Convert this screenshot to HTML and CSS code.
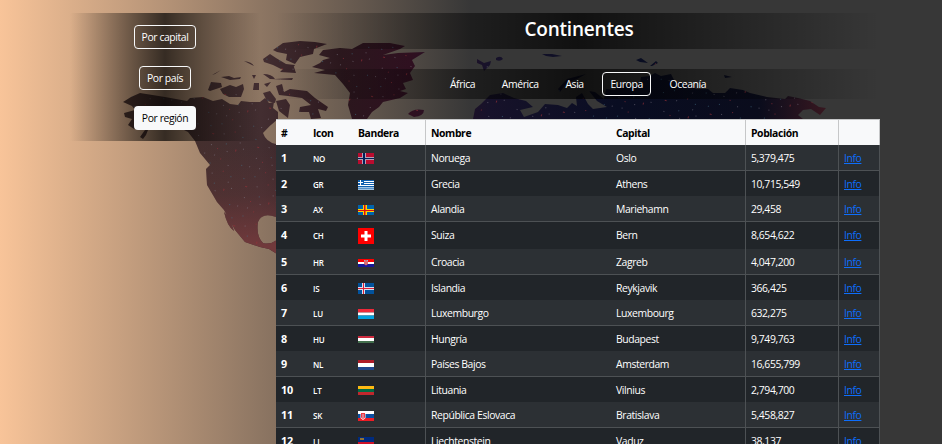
FILE: index.html
```
<!DOCTYPE html>
<html lang="es">
<head>
<meta charset="utf-8">
<title>Continentes</title>
<link rel="stylesheet" href="styles.css">
</head>
<body>
<svg class="world" viewBox="0 0 942 444" aria-hidden="true">
  <defs>
    <linearGradient id="space" gradientUnits="userSpaceOnUse" x1="120" y1="0" x2="830" y2="0">
      <stop offset="0" stop-color="#46302a"/><stop offset=".2" stop-color="#432e31"/><stop offset=".31" stop-color="#2b171d"/><stop offset=".41" stop-color="#2f1020"/><stop offset=".52" stop-color="#17122a"/><stop offset=".7" stop-color="#090d22"/><stop offset=".9" stop-color="#0a0c1c"/><stop offset="1" stop-color="#3a1820"/>
    </linearGradient>
    <linearGradient id="glow" x1="0" y1="0" x2="0" y2="1"><stop offset="0" stop-color="#70393b" stop-opacity="0"/><stop offset=".5" stop-color="#70393b" stop-opacity=".25"/><stop offset="1" stop-color="#70393b"/></linearGradient>
    <pattern id="stars" width="47" height="41" patternUnits="userSpaceOnUse" patternTransform="rotate(17)">
      <g fill="#8a8491" fill-opacity=".5"><path d="M5 4h1v1h-1zM31 9h1v1h-1zM18 21h1v1h-1zM41 30h1v1h-1zM9 35h1v1h-1zM26 37h1v1h-1zM15 3h1v1h-1zM36 25h1v1h-1z"/></g>
      <g fill="#427087" fill-opacity=".6"><path d="M13 12h1v1h-1zM37 19h1v1h-1zM23 30h1v1h-1zM44 5h1v1h-1zM3 17h1v1h-1z"/></g>
      <g fill="#983038" fill-opacity=".65"><path d="M22 5h1v1h-1zM7 24h2v1h-2zM34 33h1v2h-1zM28 16h1v1h-1zM16 37h1v1h-1z"/></g>
    </pattern>
    <path id="land" d="M123 102L131 97 140 93 165 97 187 101 190 98 203 97 213 101 222 99 230 104 238 105 241 101 250 102 260 102 265 98 269 103 274 102 273 108 278 112 278 119Q269 126 263 133Q266 142 276 144V217Q262 212 258 222Q256 236 263 243Q270 245 277 240V254L269 249 260 247 245 242 235 230 224 210 217 202 207 185 206 169 210 165 200 153 195 141 188 132 180 128 160 123 150 125 146 135 143 139 140 137 145 130 134 129 128 125 132 119 125 117 124 113 135 110 132 106ZM224 212Q230 217 234 231Q227 226 224 212ZM312 67L320 63 323 60 330 58 319 55 323 50 340 48 352 49 363 43 390 43 405 46 400 49 383 55 398 53 425 52 412 60 415 66 410 73 413 80 403 83 406 89 400 91 408 93 400 98 383 102 379 107 372 112 367 119H352L348 105 350 93 343 84 335 75 314 73 325 70ZM273 50L283 43 300 41 315 42 327 44 314 49 313 54 300 57 295 64 286 60 287 54 277 52ZM263 59L270 54 276 58 286 64 295 65 291 71 281 69 273 65 264 62ZM283 69L294 67 296 73 280 72ZM263 74Q272 74 275 79L293 78 292 80 270 79ZM244 61Q252 62 254 66ZM212 75L221 70 215 74ZM221 77L229 76 234 78 241 77 240 79 230 80ZM208 90L211 82 221 83 222 87 210 91ZM220 89L230 85 236 87 243 84 244 89 241 97 229 97 223 94ZM252 75L256 75 254 79ZM254 83L259 83 259 90 253 90ZM264 84L271 82 267 87ZM263 93L270 91 276 99 275 103 267 101ZM276 86L282 84 284 92 290 89 307 91 315 98 328 107 326 111 318 109 321 118 311 119 309 112 299 112 300 107 311 105 302 98 288 96 279 95ZM276 101L286 99 290 105 288 118 279 111ZM408 114Q413 108 424 110Q424 116 414 117ZM473 119L475 109 481 104 490 95 503 93 514 98 526 101 533 107 520 110 524 117 538 112 545 104 558 105 567 108 572 103 577 106 576 97 582 93 588 104 593 109 607 107 597 101 589 91 595 92 604 99 606 89 615 90 620 84 635 86 640 83 641 77 650 76 655 73 661 76 671 74 675 82 692 85 696 89 708 89 713 93 725 93 730 88 743 90 750 93 767 97 785 99 788 96 798 98 810 101 819 107 826 108 820 115 811 109 803 110 798 115 803 119ZM477 59L484 63 491 61 490 65 484 71 482 65 477 63ZM496 58Q501 55 503 59Q500 62 496 60ZM542 54L552 54 562 56 553 57 546 56ZM636 60L641 58 648 63 640 62ZM650 66L656 61 658 63 652 66ZM558 89L567 79 586 74 577 79 567 83 560 92ZM724 75L732 77 725 78Z"/>
    <clipPath id="clip"><use href="#land"/></clipPath>
  </defs>
  <use href="#land" fill="url(#space)"/>
  <g clip-path="url(#clip)"><rect x="195" y="145" width="90" height="100" fill="url(#glow)"/><rect x="195" y="245" width="90" height="20" fill="#70393b"/><rect width="942" height="270" fill="url(#stars)"/></g>
</svg>
<div class="layout">
  <aside class="sidebar">
    <a class="btn outline">Por capital</a>
    <a class="btn outline">Por país</a>
    <a class="btn solid">Por región</a>
  </aside>
  <main class="content">
    <h1 class="title">Continentes</h1>
    <nav class="regions">
      <a class="btn">África</a><a class="btn">América</a><a class="btn">Asia</a><a class="btn outline">Europa</a><a class="btn">Oceanía</a>
    </nav>
    <table class="countries">
      <colgroup><col class="c1"><col class="c2"><col class="c3"><col class="c4"><col class="c5"><col class="c6"><col class="c7"></colgroup>
      <thead><tr><th>#</th><th>Icon</th><th>Bandera</th><th>Nombre</th><th>Capital</th><th>Población</th><th></th></tr></thead>
      <tbody>
        <tr><th>1</th><td class="code">NO</td><td><svg class="flag" width="16" height="11"><path fill="#ba0c2f" d="M0 0h16v11H0z"/><path fill="#b3a0b4" d="M4 0h4v11H4zM0 4h16v3H0z"/><path fill="#00205b" d="M5 0h2v11H5zM0 5h16v1H0z"/></svg></td><td>Noruega</td><td>Oslo</td><td>5,379,475</td><td><a href="#">Info</a></td></tr>
        <tr class="even"><th>2</th><td class="code">GR</td><td><svg class="flag" width="16" height="10"><path fill="#0d5eaf" d="M0 0h16v10H0z"/><path fill="#fff" d="M6 1h10v1H6zM6 3h10v1H6zM0 5h16v1H0z"/><path fill="#9fc2e1" d="M0 7h16v1H0zM0 8.500h16V10H0z"/><path fill="#fff" d="M2 0h1v5H2zM0 2h5v1H0z"/></svg></td><td>Grecia</td><td>Athens</td><td>10,715,549</td><td><a href="#">Info</a></td></tr>
        <tr><th>3</th><td class="code">AX</td><td><svg class="flag" width="16" height="10"><path fill="#0064ad" d="M0 0h16v10H0z"/><path fill="#ffd300" d="M5 0h4v10H5zM0 4h16v3H0z"/><path fill="#da0e15" d="M6 0h1.500v10H6zM0 5h16v1H0z"/></svg></td><td>Alandia</td><td>Mariehamn</td><td>29,458</td><td><a href="#">Info</a></td></tr>
        <tr class="even tall"><th>4</th><td class="code">CH</td><td><svg class="flag" width="16" height="16"><path fill="red" d="M0 0h16v16H0z"/><path fill="#fff" d="M6.500 3h3v10h-3zM3 6.500h10v3H3z"/></svg></td><td>Suiza</td><td>Bern</td><td>8,654,622</td><td><a href="#">Info</a></td></tr>
        <tr><th>5</th><td class="code">HR</td><td><svg class="flag" width="16" height="8"><path fill="red" d="M0 0h16v3H0z"/><path fill="#fff" d="M0 3h16v2H0z"/><path fill="#171796" d="M0 5h16v3H0z"/><path fill="#d96c73" d="M6 1h4v4L8 6.500 6 5z"/><path fill="#8eb0d0" d="M6 1h1v1H6zM9 1h1v1H9z"/></svg></td><td>Croacia</td><td>Zagreb</td><td>4,047,200</td><td><a href="#">Info</a></td></tr>
        <tr class="even"><th>6</th><td class="code">IS</td><td><svg class="flag" width="16" height="11"><path fill="#02529c" d="M0 0h16v11H0z"/><path fill="#d6dfed" d="M4 0h3v11H4zM0 4h16v3H0z"/><path fill="#dc1e35" d="M5 0h1v11H5zM0 5h16v1H0z"/></svg></td><td>Islandia</td><td>Reykjavik</td><td>366,425</td><td><a href="#">Info</a></td></tr>
        <tr><th>7</th><td class="code">LU</td><td><svg class="flag" width="16" height="10"><path fill="#ed2939" d="M0 0h16v3.500H0z"/><path fill="#fff" d="M0 3.500h16v3H0z"/><path fill="#00a1de" d="M0 6.500h16V10H0z"/></svg></td><td>Luxemburgo</td><td>Luxembourg</td><td>632,275</td><td><a href="#">Info</a></td></tr>
        <tr class="even"><th>8</th><td class="code">HU</td><td><svg class="flag" width="16" height="7"><path fill="#cd2a3e" d="M0 0h16v2H0z"/><path fill="#fff" d="M0 2h16v3H0z"/><path fill="#436f4d" d="M0 5h16v2H0z"/></svg></td><td>Hungría</td><td>Budapest</td><td>9,749,763</td><td><a href="#">Info</a></td></tr>
        <tr><th>9</th><td class="code">NL</td><td><svg class="flag" width="16" height="10"><path fill="#ae1c28" d="M0 0h16v3H0z"/><path fill="#fff" d="M0 3h16v4H0z"/><path fill="#21468b" d="M0 7h16v3H0z"/></svg></td><td>Países Bajos</td><td>Amsterdam</td><td>16,655,799</td><td><a href="#">Info</a></td></tr>
        <tr class="even"><th>10</th><td class="code">LT</td><td><svg class="flag" width="16" height="9"><path fill="#fdb913" d="M0 0h16v3H0z"/><path fill="#006a44" d="M0 3h16v3H0z"/><path fill="#c1272d" d="M0 6h16v3H0z"/></svg></td><td>Lituania</td><td>Vilnius</td><td>2,794,700</td><td><a href="#">Info</a></td></tr>
        <tr><th>11</th><td class="code">SK</td><td><svg class="flag" width="16" height="10"><path fill="#fff" d="M0 0h16v3H0z"/><path fill="#0b4ea2" d="M0 3h16v4H0z"/><path fill="#ee1c25" d="M0 7h16v3H0z"/><path fill="#fff" d="M2.500 2h5v5L5 9 2.500 7z"/><path fill="#ee3540" d="M3 2h4v4.500L5 8 3 6.500z"/><path fill="#c9cbe2" d="M4.500 3h1v4h-1z"/></svg></td><td>República Eslovaca</td><td>Bratislava</td><td>5,458,827</td><td><a href="#">Info</a></td></tr>
        <tr class="even"><th>12</th><td class="code">LI</td><td><svg class="flag" width="16" height="10"><path fill="#002b7f" d="M0 0h16v5H0z"/><path fill="#ce1126" d="M0 5h16v5H0z"/><path fill="#927433" d="M2 1h4v2H2z"/></svg></td><td>Liechtenstein</td><td>Vaduz</td><td>38,137</td><td><a href="#">Info</a></td></tr>
      </tbody>
    </table>
  </main>
</div>
</body>
</html>
```

FILE: styles.css
```
* { box-sizing: border-box; }
html, body { height: 100%; }
body {
  margin: 0;
  overflow: hidden;
  background: linear-gradient(to right, #f8c499, #373737 50%);
  color: #fff;
  font: 10.4px/16px "Open Sans", "Noto Sans", sans-serif;
  letter-spacing: -0.4px;
}
.world { position: absolute; left: 0; top: 0; width: 942px; height: 444px; }
.layout {
  position: relative;
  display: grid;
  grid-template-columns: 190px 604px;
  column-gap: 16px;
  width: 810px;
  margin-left: 70px;
  padding-top: 13px;
  align-items: start;
}
.sidebar, .title, .regions {
  background: linear-gradient(to right, transparent, rgba(0, 0, 0, .7), transparent);
}
.sidebar {
  display: flex;
  flex-direction: column;
  align-items: center;
  gap: 16.5px;
  height: 128px;
  padding-top: 12px;
}
.btn {
  display: block;
  height: 24px;
  padding: 3px 7px;
  border: 1px solid transparent;
  border-radius: 4px;
  white-space: nowrap;
}
.outline { border-color: #f8f9fa; }
.solid { background: #f8f9fa; color: #000; }
.title {
  height: 36px;
  margin: 0 0 20px;
  font-size: 19px;
  font-weight: 600;
  line-height: 33px;
  letter-spacing: -0.2px;
  text-align: center;
  text-indent: 2px;
}
.regions {
  display: flex;
  justify-content: center;
  gap: 10.7px;
  height: 30px;
  padding-top: 3px;
}
.countries {
  width: 604px;
  margin-top: 20px;
  border-collapse: separate;
  border-spacing: 0;
  table-layout: fixed;
}
.c1 { width: 32px; }
.c2 { width: 45px; }
.c3 { width: 73px; }
.c4 { width: 185px; }
.c5 { width: 135px; }
.c6 { width: 93px; }
.c7 { width: 41px; }
.countries th, .countries td {
  padding: 1px 0 0 5px;
  text-align: left;
  vertical-align: middle;
  white-space: nowrap;
}
.countries thead th {
  height: 26px;
  background: #f8f9fa;
  color: #000;
  border-top: 1px solid #c6c7c8;
}
.countries tbody tr { height: 26px; background: #2c3034; }
.countries tbody tr.even { height: 25px; background: #212529; }
.countries tbody tr.tall { height: 27px; }
.countries tbody tr.tall > * { padding-bottom: 2px; }
.countries tbody tr:not(.even) > * { border-bottom: 1px solid #4d5154; }
.countries tbody th { font-size: 10.8px; letter-spacing: -0.2px; }
.countries tr > :nth-child(3), .countries tr > :nth-child(5),
.countries tr > :nth-child(6), .countries tr > :nth-child(7) { border-right: 1px solid #4d5154; }
.countries thead tr > :nth-child(n) { border-right-color: #c6c7c8; }
.countries .code { padding-top: 2px; font-size: 8px; font-weight: 600; letter-spacing: -0.2px; }
.flag { display: block; margin-top: 1px; }
.countries a { color: #0d6efd; text-decoration: underline; }
```
